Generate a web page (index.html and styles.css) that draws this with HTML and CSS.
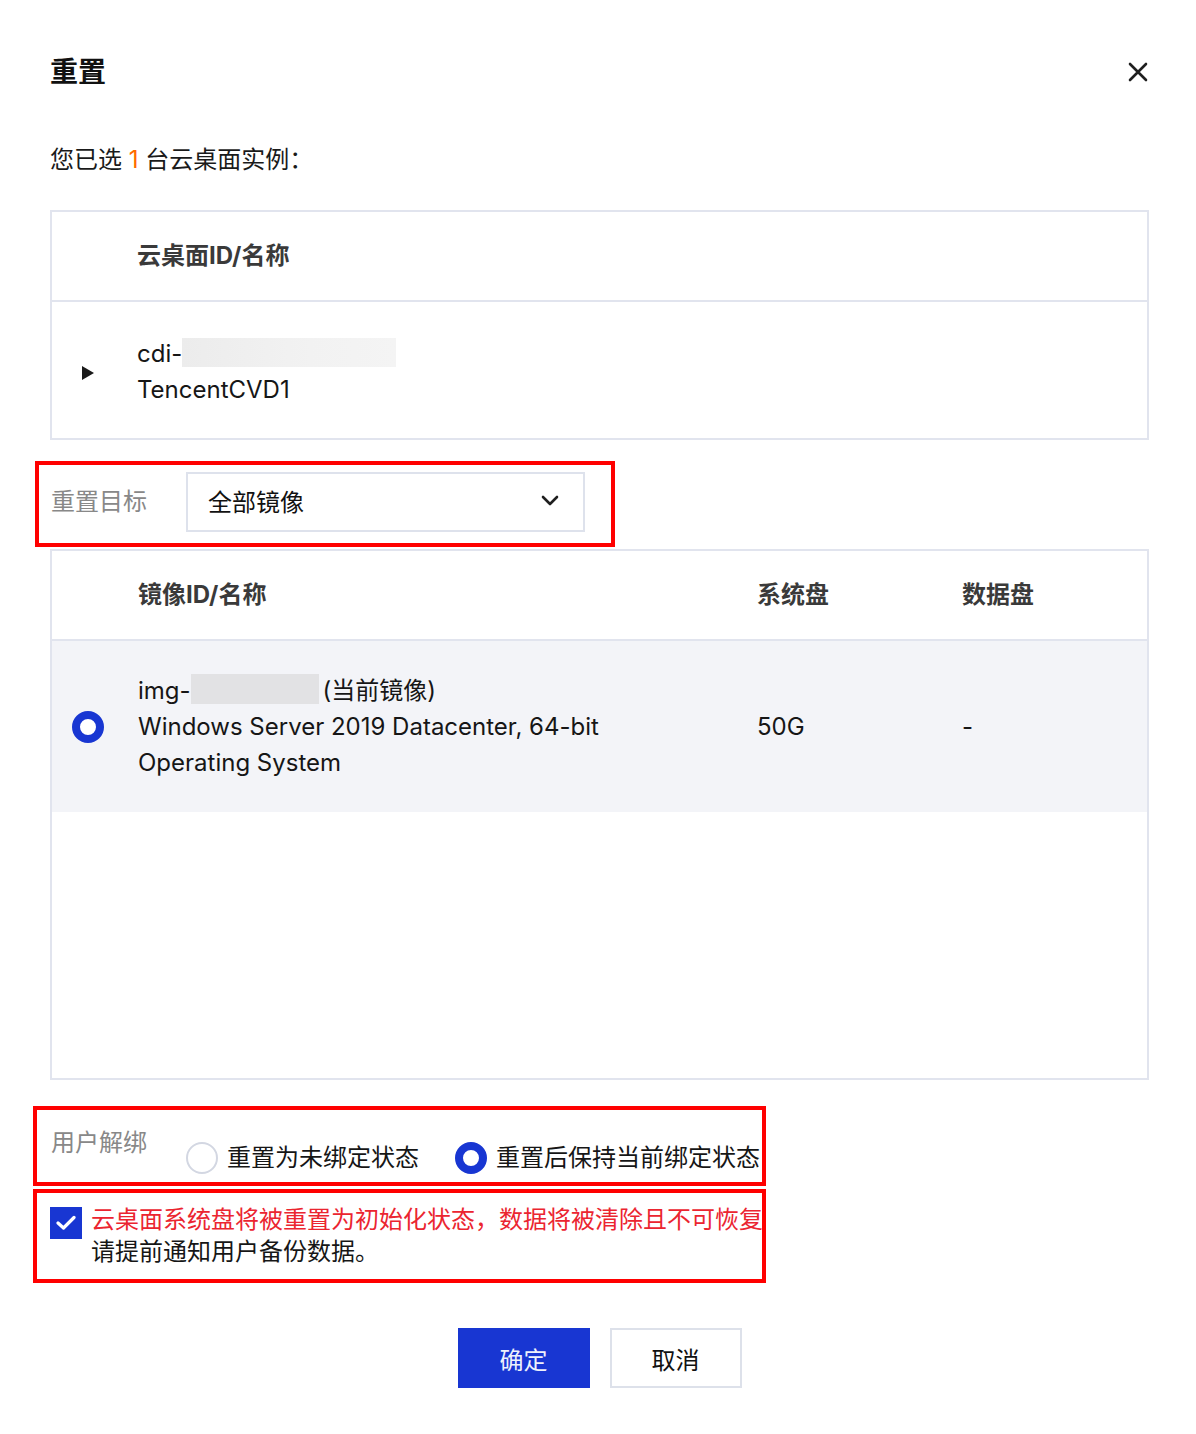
FILE: index.html
```html
<!DOCTYPE html>
<html lang="zh-CN">
<head>
  <meta charset="UTF-8">
  <meta name="viewport" content="width=device-width, initial-scale=1.0">
  <title>重置</title>
  <link rel="stylesheet" href="styles.css">
</head>
<body>
  <div class="dialog">
    <div class="dialog-header">
      <h1>重置</h1>
      <button class="close-btn" aria-label="关闭">
        <svg width="20" height="20" viewBox="0 0 20 20"><path d="M2 2 L18 18 M18 2 L2 18" stroke="#1f1f1f" stroke-width="2.6" stroke-linecap="round"/></svg>
      </button>
    </div>

    <p class="intro">您已选 <span class="count">1</span> 台云桌面实例：</p>

    <div class="table instance-table">
      <div class="table-head">
        <div></div>
        <div class="th">云桌面ID/名称</div>
      </div>
      <div class="table-row">
        <div class="expander">
          <svg width="12" height="14" viewBox="0 0 12 14"><path d="M0 0 L12 7 L0 14 Z" fill="#1a1a1a"/></svg>
        </div>
        <div class="cell">
          <div>cdi-<span class="masked masked-light"></span></div>
          <div>TencentCVD1</div>
        </div>
      </div>
    </div>

    <div class="mark mark-target">
      <span class="field-label">重置目标</span>
      <div class="select">
        <span>全部镜像</span>
        <svg width="18" height="11" viewBox="0 0 18 11"><path d="M2 2 L9 9 L16 2" fill="none" stroke="#1f1f1f" stroke-width="2.6" stroke-linecap="round" stroke-linejoin="round"/></svg>
      </div>
    </div>

    <div class="table image-table">
      <div class="table-head">
        <div></div>
        <div class="th">镜像ID/名称</div>
        <div class="th">系统盘</div>
        <div class="th">数据盘</div>
      </div>
      <div class="table-row selected">
        <div class="radio-cell"><span class="radio checked"></span></div>
        <div class="cell">
          <div>img-<span class="masked masked-dark"></span>(当前镜像)</div>
          <div>Windows Server 2019 Datacenter, 64-bit</div>
          <div>Operating System</div>
        </div>
        <div class="cell">50G</div>
        <div class="cell">-</div>
      </div>
      <div class="table-empty"></div>
    </div>

    <div class="mark mark-bind">
      <span class="field-label">用户解绑</span>
      <div class="radio-group">
        <label class="radio-option"><span class="radio"></span>重置为未绑定状态</label>
        <label class="radio-option"><span class="radio checked"></span>重置后保持当前绑定状态</label>
      </div>
    </div>

    <div class="mark mark-confirm">
      <span class="checkbox">
        <svg width="20" height="16" viewBox="0 0 20 16"><path d="M2 8 L7.5 13 L18 2.5" fill="none" stroke="#fff" stroke-width="3.2" stroke-linecap="round" stroke-linejoin="round"/></svg>
      </span>
      <div class="confirm-text">
        <div class="warn">云桌面系统盘将被重置为初始化状态，数据将被清除且不可恢复</div>
        <div>请提前通知用户备份数据。</div>
      </div>
    </div>

    <div class="dialog-footer">
      <button class="btn btn-primary">确定</button>
      <button class="btn btn-default">取消</button>
    </div>
  </div>
</body>
</html>
```

FILE: styles.css
```css
body {
  margin: 0;
  background-color: #fff;
  font-family: Inter, "Noto Sans CJK SC", sans-serif;
  font-size: 24px;
  color: #161616;
}

.dialog {
  width: 1099px;
  padding: 52px 47px 0 50px;
}

.dialog-header {
  display: flex;
  align-items: center;
  justify-content: space-between;
  height: 40px;
}

h1 {
  margin: 0;
  font-size: 28px;
  font-weight: bold;
  line-height: 40px;
  color: #111;
}

.close-btn {
  background: none;
  border: none;
  padding: 0;
  margin-right: 1px;
  display: flex;
  cursor: pointer;
}

.intro {
  margin: 50px 0 32px;
  line-height: 36px;
  color: #1a1a1a;
}

.count {
  color: #ff6a00;
}

/* tables */
.table {
  border: 2px solid #e1e4ee;
}

.table-head,
.table-row {
  display: grid;
  align-items: center;
}

.instance-table .table-head,
.instance-table .table-row {
  grid-template-columns: 85px 1fr;
}

.image-table .table-head,
.image-table .table-row {
  grid-template-columns: 86px 619px 205px 1fr;
}

.table-head {
  border-bottom: 2px solid #e1e4ee;
}

.th {
  padding: 26px 0;
  line-height: 36px;
  font-weight: bold;
  color: #3a3a3a;
}

.instance-table .table-row {
  padding: 34px 0 30px;
}

.cell {
  line-height: 36px;
  color: #161616;
}

.expander {
  display: flex;
  justify-content: center;
  padding-right: 14px;
  padding-top: 2px;
}

.masked {
  display: inline-block;
  vertical-align: middle;
  height: 29px;
  margin-top: -6px;
}

.masked-light {
  width: 214px;
  background: linear-gradient(90deg, #ececec, #f2f2f2 60%, #f4f4f4);
}

.masked-dark {
  width: 128px;
  height: 30px;
  margin-right: 4px;
  background-color: #e2e2e4;
}

.image-table .table-row {
  padding: 32px 0 31px;
}

.selected {
  background-color: #f3f4f8;
}

.radio-cell {
  display: flex;
  justify-content: center;
  padding-right: 14px;
}

.table-empty {
  height: 266px;
}

/* radios and checkbox */
.radio {
  display: inline-block;
  box-sizing: border-box;
  width: 32px;
  height: 32px;
  border-radius: 50%;
  border: 2px solid #d3d7e2;
  background-color: #fff;
  flex-shrink: 0;
}

.radio.checked {
  border: 8px solid #1836d2;
}

.checkbox {
  display: flex;
  align-items: center;
  justify-content: center;
  width: 32px;
  height: 32px;
  background-color: #1836d2;
  flex-shrink: 0;
  margin-top: 3px;
}

/* annotated form rows */
.mark {
  border: 4px solid #ff0000;
  display: flex;
}

.mark-target {
  margin: 21px 0 2px -15px;
  padding: 7px 26px 11px 12px;
  box-sizing: border-box;
  width: 580px;
  align-items: center;
}

.field-label {
  width: 135px;
  flex-shrink: 0;
  line-height: 36px;
  color: #888;
}

.select {
  flex: 1;
  height: 60px;
  box-sizing: border-box;
  border: 2px solid #dee2ec;
  display: flex;
  align-items: center;
  justify-content: space-between;
  padding: 0 24px 3px 20px;
  color: #111;
}

.mark-bind {
  width: 733px;
  box-sizing: border-box;
  margin: 26px 0 0 -17px;
  padding: 15px 0 6px 14px;
  align-items: flex-start;
}

.radio-group {
  display: flex;
  gap: 36px;
  padding-top: 15px;
}

.radio-option {
  display: flex;
  align-items: center;
  gap: 9px;
  line-height: 36px;
  color: #161616;
  white-space: nowrap;
}

.mark-confirm {
  width: 733px;
  box-sizing: border-box;
  margin: 3px 0 0 -17px;
  padding: 11px 0 11px 13px;
  align-items: flex-start;
  gap: 9px;
}

.confirm-text {
  line-height: 32px;
  color: #161616;
  white-space: nowrap;
  overflow: hidden;
}

.warn {
  color: #eb2530;
}

/* footer */
.dialog-footer {
  display: flex;
  justify-content: center;
  gap: 20px;
  margin-top: 45px;
}

.btn {
  width: 132px;
  height: 60px;
  font-family: Inter, "Noto Sans CJK SC", sans-serif;
  font-size: 24px;
  cursor: pointer;
}

.btn-primary {
  background-color: #1836d2;
  color: #eef1fc;
  border: none;
  box-shadow: 0 3px 0 #e8edfb;
}

.btn-default {
  background-color: #fff;
  color: #111;
  border: 2px solid #dde1ea;
}
```
